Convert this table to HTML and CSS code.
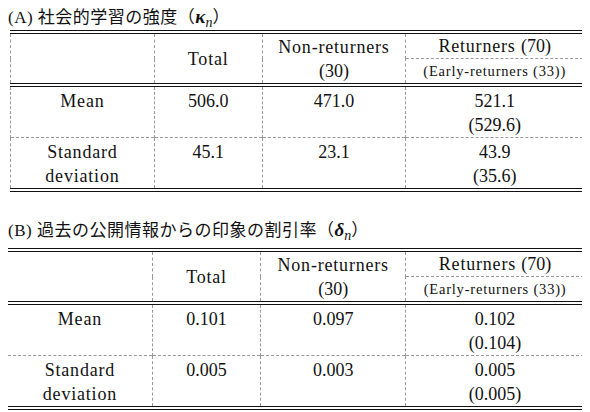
FILE: index.html
```html
<!DOCTYPE html>
<html lang="ja">
<head>
<meta charset="utf-8">
<link rel="stylesheet" href="styles.css">
</head>
<body>
<h2 class="title title-a">(A) 社会的学習の強度（<span class="math">κ<sub>n</sub></span>）</h2>
<table class="tbl tbl-a">
  <colgroup><col class="c1"><col class="c2"><col class="c3"><col class="c4"></colgroup>
  <tr class="h1">
    <td rowspan="2"></td>
    <td rowspan="2" class="mid">Total</td>
    <td rowspan="2" class="mid">Non-returners<br><span class="num">(30)</span></td>
    <td>Returners <span class="num">(70)</span></td>
  </tr>
  <tr class="h2">
    <td class="small">(Early-returners (33))</td>
  </tr>
  <tr class="body first">
    <td>Mean</td>
    <td class="num">506.0</td>
    <td class="num">471.0</td>
    <td class="num">521.1<br>(529.6)</td>
  </tr>
  <tr class="body">
    <td>Standard<br>deviation</td>
    <td class="num">45.1</td>
    <td class="num">23.1</td>
    <td class="num">43.9<br>(35.6)</td>
  </tr>
</table>

<h2 class="title title-b">(B) 過去の公開情報からの印象の割引率（<span class="math">δ<sub>n</sub></span>）</h2>
<table class="tbl tbl-b">
  <colgroup><col class="c1"><col class="c2"><col class="c3"><col class="c4"></colgroup>
  <tr class="h1">
    <td rowspan="2"></td>
    <td rowspan="2" class="mid">Total</td>
    <td rowspan="2" class="mid">Non-returners<br><span class="num">(30)</span></td>
    <td>Returners <span class="num">(70)</span></td>
  </tr>
  <tr class="h2">
    <td class="small">(Early-returners (33))</td>
  </tr>
  <tr class="body first">
    <td>Mean</td>
    <td class="num">0.101</td>
    <td class="num">0.097</td>
    <td class="num">0.102<br>(0.104)</td>
  </tr>
  <tr class="body">
    <td>Standard<br>deviation</td>
    <td class="num">0.005</td>
    <td class="num">0.003</td>
    <td class="num">0.005<br>(0.005)</td>
  </tr>
</table>
</body>
</html>
```
FILE: styles.css
```css
html, body {
  background: #ffffff;
}
body {
  margin: 8px;
  color: #111111;
  font-family: "Liberation Serif", "Noto Sans CJK JP", serif;
}
.title {
  margin: 0;
  height: 20px;
  font-size: 17px;
  font-weight: normal;
  line-height: 20px;
  letter-spacing: 0.5px;
  font-family: "Liberation Serif", "Noto Sans CJK JP", serif;
}
.title-a {
  margin-bottom: 2px;
}
.title-b {
  margin-top: 29px;
  margin-bottom: 7px;
}
.math {
  font-style: italic;
  font-weight: bold;
  font-size: 19px;
  line-height: 0;
  letter-spacing: 0;
}
.math sub {
  font-size: 14px;
  font-weight: normal;
  vertical-align: -4px;
  line-height: 0;
}
.tbl {
  border-collapse: collapse;
  table-layout: fixed;
  border-top: 4px double #111;
  border-bottom: 4px double #111;
  border-left: 1px dashed #999;
  border-right: 1px dashed #999;
}
.tbl-a {
  width: 574px;
  margin-left: 2px;
}
.tbl-b {
  width: 578px;
  margin-left: -1px;
}
.c1 { width: 25.1%; }
.c2 { width: 18.8%; }
.c3 { width: 25.1%; }
.c4 { width: 31%; }
.tbl td {
  border-left: 1px dashed #999;
  border-right: 1px dashed #999;
  padding: 0;
  text-align: center;
  vertical-align: top;
  font-size: 18px;
  line-height: 24px;
  letter-spacing: 0.8px;
}
.tbl .num {
  letter-spacing: 0;
}
.tbl .h1 td,
.tbl .h2 td {
  height: 24px;
}
.tbl td.mid {
  vertical-align: middle;
}
.tbl .h2 td {
  border-top: 1px dashed #999;
}
.tbl td.small {
  font-size: 14.5px;
  letter-spacing: 0.8px;
}
.tbl .body td {
  padding-top: 2px;
  border-top: 1px dashed #999;
}
.tbl .body.first td {
  border-top: 4px double #111;
}
```
